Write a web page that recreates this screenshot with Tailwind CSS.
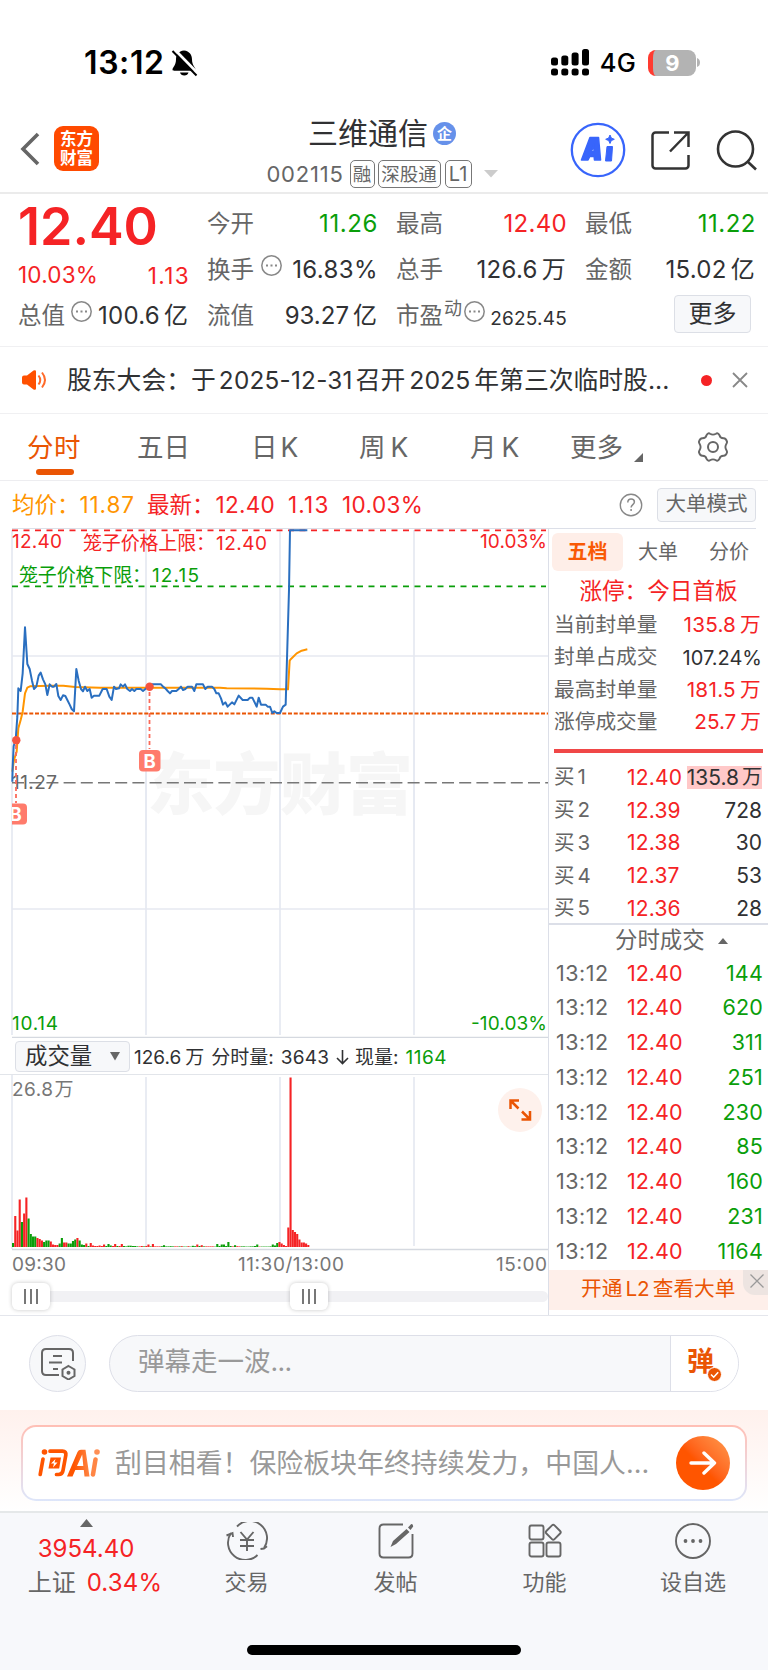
<!DOCTYPE html>
<html lang="zh-CN">
<head>
<meta charset="utf-8">
<meta name="viewport" content="width=768">
<title>三维通信 002115</title>
<script src="https://cdn.jsdelivr.net/npm/@tailwindcss/browser@4"></script>
</head>
<body class="bg-white">
<div class="w-[768px] h-[1670px] overflow-hidden flex flex-col bg-white text-[#303133] leading-none whitespace-nowrap font-['Inter','Noto_Sans_CJK_SC',sans-serif]">

<!-- status bar -->
<div class="h-[110px] shrink-0 flex items-start justify-between pl-[84px] pr-[68px] pt-[46px] text-black">
  <div class="flex items-center h-[33px]">
    <span class="text-[32px] font-semibold tracking-[0.6px]">13:12</span>
    <svg class="ml-[6px]" width="28" height="30" viewBox="0 0 28 30"><path d="M13 2.500c-5.500.5-8 4.500-8 9 0 6-3.500 8-3.500 10 0 .8.5 1.200 1.500 1.200h20c1 0 1.500-.4 1.500-1.200 0-2-3.500-4-3.500-10 0-4.500-2.500-8.500-8-9zM9 24.500h8.500c-.5 2-2 3-4.200 3S9.500 26.500 9 24.500z" fill="#000"/><path d="M3.500 1.500L27 25.500" stroke="#fff" stroke-width="3"/><path d="M1.500 3L25.500 27.500" stroke="#000" stroke-width="2"/></svg>
  </div>
  <div class="flex items-center h-[33px]">
    <svg width="38" height="27" viewBox="0 0 38 27"><g fill="#000"><rect x="0" y="8.500" width="7" height="8" rx="2.500"/><rect x="10.300" y="6.500" width="7" height="10" rx="2.500"/><rect x="20.600" y="3.500" width="7" height="13" rx="2.500"/><rect x="31" y="0" width="7" height="16.500" rx="2.500"/><rect x="0" y="19.500" width="7" height="7" rx="2.500"/><rect x="10.300" y="19.500" width="7" height="7" rx="2.500"/><rect x="20.600" y="19.500" width="7" height="7" rx="2.500"/><rect x="31" y="19.500" width="7" height="7" rx="2.500"/></g></svg>
    <span class="ml-[11px] text-[25.500px] font-medium tracking-[0.2px]">4G</span>
    <div class="ml-[12px] relative w-[48px] h-[26px] rounded-[8px] overflow-hidden bg-[#b3b3b3] flex items-center justify-center text-white text-[22px] font-bold border-l-[5px] border-[#ff3b30]"><span class="-ml-[4px]">9</span></div>
    <svg class="ml-px" width="3" height="9" viewBox="0 0 3 9"><path d="M0 0q3 1 3 4.500T0 9z" fill="#b3b3b3"/></svg>
  </div>
</div>

<!-- title bar -->
<div class="h-[84px] shrink-0 border-b-2 border-[#ebebeb] flex items-start justify-between pl-[20px] pr-[10px]">
  <div class="flex items-center pt-[16px] w-[167px]">
    <svg width="20" height="34" viewBox="0 0 20 34"><path d="M18 2L3 17l15 15" fill="none" stroke="#666" stroke-width="3.600"/></svg>
    <div class="ml-[14px] size-[45px] rounded-[9px] bg-[#ff4a00] text-white font-bold text-[16.500px] flex flex-col items-center justify-center gap-[2px] leading-[17px]"><span>东方</span><span>财富</span></div>
  </div>
  <div class="flex flex-col items-center w-[260px] pt-[7px]">
    <div class="flex items-center h-[32px] pl-[7px]"><span class="text-[30px]">三维通信</span>
      <span class="ml-[5px] size-[23px] rounded-full bg-[#6691ea] text-white text-[15px] font-bold flex items-center justify-center">企</span></div>
    <div class="flex items-center h-[28px] mt-[11px] text-[#666] pl-[7px]">
      <span class="text-[22px] tracking-[0.8px]">002115</span>
      <span class="ml-[6px] h-[28px] w-[25px] border border-[#777] rounded-[5px] text-[18.500px] flex items-center justify-center">融</span>
      <span class="ml-[3px] h-[28px] w-[63px] border border-[#777] rounded-[5px] text-[18.500px] flex items-center justify-center">深股通</span>
      <span class="ml-[4px] h-[28px] w-[27px] border border-[#777] rounded-[5px] text-[20px] flex items-center justify-center">L1</span>
      <svg class="ml-[12px]" width="14" height="8" viewBox="0 0 14 8"><path d="M0 0h14L7 7.500z" fill="#ccc"/></svg>
    </div>
  </div>
  <div class="flex items-center pt-[11px]">
    <svg class="mt-px" width="56" height="56" viewBox="0 0 56 56"><circle cx="28" cy="28" r="26.200" fill="#fff" stroke="#3865fb" stroke-width="2.300"/><path d="M20 15.500h8.500L30.500 38h-6l-.3-3.500h-4.500L18 38h-6.500zM24 22l-2.600 7.800H24z" fill="#3865fb" stroke="#3865fb" stroke-width="1.600" fill-rule="evenodd" stroke-linejoin="round"/><path d="M37 24.500h5.500L41.500 39H35.500z" fill="#3865fb" stroke="#3865fb" stroke-linejoin="round"/><path d="M40 13l1.300 3 3 1.300-3 1.300L40 21.500l-1.300-2.900-3-1.300 3-1.300z" fill="#3865fb" stroke="#3865fb"/></svg>
    <svg class="ml-[24px] mt-px" width="41" height="41" viewBox="0 0 41 41"><path d="M19 2.500H5.500a3 3 0 0 0-3 3v30a3 3 0 0 0 3 3h30a3 3 0 0 0 3-3V25M24 2.500h14.500v14.500M38.500 2.500L20 21.500" fill="none" stroke="#333" stroke-width="2.500"/></svg>
    <svg class="ml-[23px] mt-px" width="44" height="44" viewBox="0 0 44 44"><circle cx="21.500" cy="21" r="17.500" fill="none" stroke="#333" stroke-width="2.600"/><path d="M33.500 33.500l8.500 8" stroke="#333" stroke-width="2.600"/></svg>
  </div>
</div>

<!-- quote summary -->
<div class="h-[153px] shrink-0 border-b border-[#f0f0f2] pl-[18px] pt-[7px] grid grid-cols-[170px_170px_170px_170px] gap-[19px] text-[24px]">
  <div class="text-[#f52325]">
    <div class="h-[52px] flex items-center text-[52px] font-semibold">12.40</div>
    <div class="h-[40px] pt-[5px] flex items-center justify-between text-[22.500px]"><span class="tracking-[0.200px]">10.03%</span><span class="tracking-[1.400px] -mr-[2px] pt-px">1.13</span></div>
    <div class="h-[46px] flex items-center justify-between text-[#303133]"><span class="text-[#666] text-[23.500px]">总值</span><svg class="-mt-[10px] ml-[1px]" width="21" height="21" viewBox="0 0 21 21"><circle cx="10.500" cy="10.500" r="9.700" fill="none" stroke="#888" stroke-width="1.500"/><path d="M5 9.500h2v2H5zM9.500 9.500h2v2h-2zM14 9.500h2v2h-2z" fill="#888"/></svg><span class="tracking-[0.300px]">100.6<span class="ml-[4px] tracking-normal">亿</span></span></div>
  </div>
  <div>
    <div class="h-[46px] flex items-center justify-between"><span class="text-[#666] text-[23.500px]">今开</span><span class="text-[#0a9e0a] tracking-[0.600px] -mr-px">11.26</span></div>
    <div class="h-[46px] flex items-center justify-between"><span class="text-[#666] text-[23.500px]">换手</span><svg class="-mt-[10px] -ml-[4px]" width="21" height="21" viewBox="0 0 21 21"><circle cx="10.500" cy="10.500" r="9.700" fill="none" stroke="#888" stroke-width="1.500"/><path d="M5 9.500h2v2H5zM9.500 9.500h2v2h-2zM14 9.500h2v2h-2z" fill="#888"/></svg><span class="tracking-[0.400px] -mr-px">16.83%</span></div>
    <div class="h-[46px] flex items-center justify-between"><span class="text-[#666] text-[23.500px]">流值</span><span>93.27<span class="ml-[4px]">亿</span></span></div>
  </div>
  <div>
    <div class="h-[46px] flex items-center justify-between"><span class="text-[#666] text-[23.500px]">最高</span><span class="text-[#f52325] tracking-[0.300px] -mr-px">12.40</span></div>
    <div class="h-[46px] flex items-center justify-between"><span class="text-[#666] text-[23.500px]">总手</span><span class="tracking-[0.300px]">126.6<span class="ml-[4px]">万</span></span></div>
    <div class="h-[46px] flex items-center"><span class="text-[#666] text-[23.500px]">市盈</span><span class="text-[#666] text-[18px] -mt-[14px] ml-[1px]">动</span><svg class="-mt-[10px] ml-[2px]" width="21" height="21" viewBox="0 0 21 21"><circle cx="10.500" cy="10.500" r="9.700" fill="none" stroke="#888" stroke-width="1.500"/><path d="M5 9.500h2v2H5zM9.500 9.500h2v2h-2zM14 9.500h2v2h-2z" fill="#888"/></svg><span class="ml-auto -mr-px text-[19px] pt-[5px] tracking-[0.200px]">2625.45</span></div>
  </div>
  <div>
    <div class="h-[46px] flex items-center justify-between"><span class="text-[#666] text-[23.500px]">最低</span><span class="text-[#0a9e0a] tracking-[0.500px] -mr-px">11.22</span></div>
    <div class="h-[46px] flex items-center justify-between"><span class="text-[#666] text-[23.500px]">金额</span><span class="tracking-[0.300px]">15.02<span class="ml-[4px]">亿</span></span></div>
    <div class="h-[46px] flex items-center justify-end pr-[4px]"><span class="w-[77px] h-[38px] -mt-[4px] border border-[#dcdfe6] rounded-[4px] bg-[#f7f8fa] flex items-center justify-center">更多</span></div>
  </div>
</div>

<!-- announcement -->
<div class="h-[67px] shrink-0 border-b border-[#f0f0f2] flex items-center pl-[21px] pr-[20px]">
  <svg width="26" height="22" viewBox="0 0 26 22"><path d="M1 8.500q0-2 2-2h3L12.500 1.500q2.500-1 2.500 1v17q0 2-2.500 1L6 15.500H3q-2 0-2-2z" fill="#ff5000"/><path d="M17.500 6.500q3.500 4.500 0 9M21 3.500q6 7.500 0 15" fill="none" stroke="#ff6a2a" stroke-width="2"/></svg>
  <span class="ml-[20px] text-[24.800px]">股东大会：</span><span class="text-[24.800px]">于<span class="ml-[3px] mr-[3px] text-[24.300px] tracking-[0.250px]">2025-12-31</span>召开<span class="mx-[4px]">2025</span>年第三次临时股...</span>
  <span class="ml-auto size-[11px] rounded-full bg-[#f52325]"></span>
  <svg class="ml-[20px]" width="16" height="16" viewBox="0 0 16 16"><path d="M1 1l14 14M15 1L1 15" stroke="#888" stroke-width="1.800"/></svg>
</div>

<!-- period tabs -->
<div class="h-[67px] shrink-0 border-b border-[#ededf0] flex text-[26.500px] text-[#666] pl-[27px]">
  <div class="relative w-[110px] flex items-center text-[#ea5504] tracking-[0.500px]">分时<span class="absolute left-[9px] bottom-[5px] w-[38px] h-[6px] rounded-full bg-[#ea5504]"></span></div>
  <div class="w-[114px] flex items-center">五日</div>
  <div class="w-[108px] flex items-center">日<span class="ml-[3px]">K</span></div>
  <div class="w-[111px] flex items-center">周<span class="ml-[5px]">K</span></div>
  <div class="w-[100px] flex items-center">月<span class="ml-[5px]">K</span></div>
  <div class="w-[127px] flex items-center">更多<svg class="ml-[11px] mt-[20px]" width="9" height="9" viewBox="0 0 9 9"><path d="M9 0v9H0z" fill="#666"/></svg></div>
  <div class="flex items-center"><svg width="32" height="30" viewBox="0 0 32 30"><path d="M9.500 3.200C10.800 1 12 .9 13 1.700Q16 3.600 19 1.700C20 .9 21.200 1 22.500 3.200Q23.300 6.400 26.800 6.200C28.600 6.200 29.500 8 30 9.600 30.500 11.300 28.400 12 28.400 15S30.500 18.700 30 20.400C29.500 22 28.600 23.800 26.800 23.800Q23.300 23.600 22.500 26.800C21.200 29 20 29.100 19 28.300Q16 26.400 13 28.300C12 29.100 10.800 29 9.500 26.800Q8.700 23.600 5.200 23.800C3.400 23.800 2.500 22 2 20.400 1.500 18.700 3.600 18 3.600 15S1.500 11.300 2 9.600C2.500 8 3.400 6.200 5.200 6.200Q8.700 6.400 9.500 3.200z" fill="none" stroke="#666" stroke-width="1.900"/><circle cx="16" cy="15" r="5" fill="none" stroke="#666" stroke-width="2"/></svg></div>
</div>

<!-- price legend -->
<div class="h-[47px] shrink-0 flex items-center pl-[12px] pr-[12px] text-[22.500px] text-[#f52325]">
  <span class="w-[135px] pt-[2px] text-[#ff9500]">均价：<span class="tracking-[0.900px]">11.87</span></span>
  <span class="w-[141px] pt-[2px]">最新：<span class="tracking-[0.300px] ml-px">12.40</span></span>
  <span class="w-[54px] pt-[2px] tracking-[1.200px]">1.13</span><span class="pt-[2px] tracking-[0.400px]">10.03%</span>
  <svg class="ml-auto" width="24" height="24" viewBox="0 0 24 24"><circle cx="12" cy="12" r="10.700" fill="none" stroke="#888" stroke-width="1.400"/><path d="M8.800 9.500q0-3.500 3.300-3.500t3.300 3c0 2.500-3.300 2.800-3.300 5.500M12.100 16v2" fill="none" stroke="#888" stroke-width="1.500"/></svg>
  <span class="ml-[14px] w-[99px] h-[34px] border border-[#dcdfe6] rounded-[4px] bg-[#f7f8fa] text-[#666] text-[20.500px] flex items-center justify-center">大单模式</span>
</div>

<!-- chart and order book -->
<div class="h-[788px] shrink-0 flex border-b border-[#e4e6ec]">
  <div class="w-[549px] border-r border-[#dcdfe8] flex flex-col">
    <svg class="shrink-0" width="548" height="510" viewBox="0 528 548 510">
      <path d="M12 528.500H548" stroke="#dcdfe8"/>
      <path d="M12 530V1035M146 530V1035M280 530V1035M414 530V1035M12 656H548M12 909H548" stroke="#e6e9f1" stroke-width="1.700"/>
      <path d="M12 1037.300H548" stroke="#d5d9e0" stroke-width="1.300"/>
      <text x="147" y="809" textLength="266" font-size="67" font-weight="900" fill="#f6f6f6">东方财富</text>
      <path d="M146 740V830M280 740V830M414 740V830" stroke="#e6e9f1" stroke-width="1.700"/>
      <path d="M12 530.300H546" stroke="#f52325" stroke-width="1.800" stroke-dasharray="6 5.500"/>
      <path d="M12 586.300H546" stroke="#0a9e0a" stroke-width="1.800" stroke-dasharray="6 5.500"/>
      <path d="M12 713.600H548" stroke="#ea5504" stroke-width="2" stroke-dasharray="4 1.750"/>
      <path d="M12 782.700H548" stroke="#777" stroke-width="1.600" stroke-dasharray="12 5.200"/>
      <text x="12" y="788.500" textLength="45" font-size="19" fill="#666">11.27</text>
      <g transform="translate(0 590) scale(.33333)" fill="none" stroke-linejoin="round">
        <path stroke="#ff9500" stroke-width="6" d="M37 545L42 510 50 485 55 415 62 390 68 365 75 310 82 293 90 289 150 287 190 287 225 291 300 293 660 293 680 295 800 296 840 298 864 298 869 212 873 207 890 190 905 182 922 178"/>
        <path stroke="#2a6fc0" stroke-width="6" d="M37 575L38 530 41 468 47 450 52 380 55 295 62 303 68 250 75 112 82 222 89 237 96 272 102 297 109 290 116 257 122 248 129 268 136 283 142 315 149 283 156 290 162 290 169 282 175 318 182 330 189 316 196 318 202 330 209 344 215 357 222 364 229 237 236 272 243 297 249 304 255 290 262 303 269 297 275 323 282 317 298 317 308 297 320 297 328 320 335 330 342 290 348 297 357 295 362 283 369 290 375 283 382 297 390 303 396 297 403 303 409 297 422 297 429 303 436 297 443 292 449 290 456 283 483 283 489 290 496 295 503 303 510 310 516 303 529 303 536 297 543 290 549 300 556 297 563 290 576 290 583 303 589 283 609 283 616 297 623 290 636 290 643 297 649 310 656 310 663 325 669 344 676 337 683 350 696 337 703 343 716 317 728 330 743 330 750 323 757 323 770 350 776 323 783 344 797 344 803 350 810 350 817 369 823 364 830 369 840 369 849 350 857 344 867 0 870 -179 922 -179"/>
      </g>
      <g stroke="#fb6a5a" stroke-width="1.800" stroke-dasharray="4 3"><path d="M16 745V803M149.500 692V749"/></g>
      <circle cx="16.300" cy="740.300" r="4.200" fill="#f5533f"/><circle cx="149.600" cy="686.800" r="4.200" fill="#f5533f"/>
      <path d="M12 803.500h11q4 0 4 4v13q0 4-4 4H12z" fill="#ff7b6c"/>
      <rect x="139" y="750" width="21.500" height="21.500" rx="4" fill="#ff7b6c"/>
      <clipPath id="plot"><path d="M12 528h536v510H12z"/></clipPath>
      <text x="9.500" y="821" font-size="18.500" font-weight="700" fill="#fff" clip-path="url(#plot)">B</text>
      <text x="143.500" y="767.500" font-size="18.500" font-weight="700" fill="#fff">B</text>
      <g font-size="19" fill="#f52325"><text x="12" y="547.500" textLength="50">12.40</text><text x="83" y="549.500" textLength="132">笼子价格上限：</text><text x="216" y="549.500" textLength="51">12.40</text><text x="480" y="547.500" textLength="67">10.03%</text></g>
      <g font-size="19" fill="#0a9e0a"><text x="19" y="582" textLength="132">笼子价格下限：</text><text x="152" y="582" textLength="47">12.15</text><text x="12" y="1030" textLength="46">10.14</text><text x="471" y="1030" textLength="76">-10.03%</text></g>
    </svg>
    <div class="h-[37px] shrink-0 border-b border-[#e2e5ea] flex items-center pl-[15px] text-[19px]">
      <div class="w-[115px] h-[31px] border border-[#dcdfe6] rounded-[4px] bg-[#f7f8fa] flex items-center justify-between pl-[9px] pr-[9px] text-[22.400px]">成交量<svg width="10" height="9" viewBox="0 0 10 9"><path d="M0 0h10L5 8.500z" fill="#666"/></svg></div>
      <span class="ml-[4px] pt-[2px]">126.6<span class="ml-[4px]">万</span></span><span class="ml-[7px] pt-[2px]">分时量:</span><span class="ml-[7px] pt-[2px] tracking-[0.200px]">3643</span>
      <svg class="ml-[7px] mt-px" width="13" height="16" viewBox="0 0 13 16"><path d="M6.500 1v13M1 9l5.500 5.500L12 9" fill="none" stroke="#303133" stroke-width="1.600"/></svg>
      <span class="ml-[6px] pt-[2px]">现量:</span><span class="ml-[7px] pt-[2px] text-[#0a9e0a] tracking-[0.500px]">1164</span>
    </div>
    <div class="relative h-[202px] shrink-0">
      <svg width="548" height="202" viewBox="0 1075 548 202">
        <path d="M12 1075V1249M146 1077V1246M280 1077V1246M414 1077V1246" stroke="#e6e9f1" stroke-width="1.700"/>
        <path d="M12 1249.500H548" stroke="#d5d9e0" stroke-width="1.300"/>
        <g id="bars"></g>
        <g font-size="19" fill="#777"><text x="12" y="1096" textLength="41">26.8</text><text x="54.500" y="1096">万</text><text x="12" y="1271" textLength="54">09:30</text><text x="238" y="1271" textLength="106">11:30/13:00</text><text x="496" y="1271" textLength="51">15:00</text></g>
      </svg>
      <div class="absolute left-[498px] top-[13px] size-[44px] rounded-full bg-[#fef1ec] flex items-center justify-center"><svg width="24" height="24" viewBox="0 0 24 24"><path d="M2.500 11V2.500h8.500M3 3l7.500 7.500M22 13v8.500h-8.500M21.500 21L14 13.500" fill="none" stroke="#ea5504" stroke-width="2.500"/></svg></div>
    </div>
    <div class="flex-1 pl-[12px] pt-[6px]">
      <div class="relative h-[27px] flex items-center">
        <span class="w-full h-[11px] rounded-full bg-[#f1f1f4]"></span>
        <span class="absolute left-0 top-0 w-[38px] h-[27px] rounded-[6px] bg-white shadow-[0_0_4px_rgba(0,0,0,0.22)] flex items-center justify-center gap-[4px]"><i class="w-[2px] h-[15px] bg-[#777]"></i><i class="w-[2px] h-[15px] bg-[#777]"></i><i class="w-[2px] h-[15px] bg-[#777]"></i></span>
        <span class="absolute left-[278px] top-0 w-[38px] h-[27px] rounded-[6px] bg-white shadow-[0_0_4px_rgba(0,0,0,0.22)] flex items-center justify-center gap-[4px]"><i class="w-[2px] h-[15px] bg-[#777]"></i><i class="w-[2px] h-[15px] bg-[#777]"></i><i class="w-[2px] h-[15px] bg-[#777]"></i></span>
      </div>
    </div>
  </div>

  <div class="w-[219px] flex flex-col">
    <div class="h-px mr-[12px] bg-[#dcdfe8] shrink-0"></div>
    <div class="h-[46px] shrink-0 flex items-center pl-[3px] text-[20px] text-[#666]">
      <span class="w-[71px] h-[38px] rounded-[6px] bg-[#feeee8] text-[#f95a05] font-bold flex items-center justify-center">五档</span>
      <span class="ml-[15px]">大单</span><span class="ml-[31px]">分价</span>
    </div>
    <div class="h-[32px] shrink-0 flex items-center justify-center text-[22.600px] text-[#f52325]">涨停：今日首板</div>
    <div class="h-[132px] shrink-0 flex flex-col pt-[2px] pl-[5px] pr-[7px] text-[20.700px]">
      <div class="h-[32.500px] flex items-center justify-between"><span class="text-[#666]">当前封单量</span><span class="text-[#f52325] tracking-[0.200px]">135.8<span class="ml-[4px]">万</span></span></div>
      <div class="h-[32.500px] flex items-center justify-between"><span class="text-[#666]">封单占成交</span><span class="text-[20px] -mr-px">107.24%</span></div>
      <div class="h-[32.500px] flex items-center justify-between"><span class="text-[#666]">最高封单量</span><span class="text-[#f52325] tracking-[0.300px]">181.5<span class="ml-[4px]">万</span></span></div>
      <div class="h-[32.500px] flex items-center justify-between"><span class="text-[#666]">涨停成交量</span><span class="text-[#f52325]">25.7<span class="ml-[4px]">万</span></span></div>
    </div>
    <div class="h-[4px] shrink-0 mt-[10px] mx-[5px] bg-[#f04747]"></div>
    <div class="h-[172px] shrink-0 pt-[8px] border-b-2 border-[#dcdfe8] pl-[5px] pr-[6px] text-[21px]" id="bids"></div>
    <div class="h-[31px] shrink-0 flex items-center pl-[66px] text-[22.400px] text-[#666]">分时成交<svg class="ml-[13px]" width="10" height="6" viewBox="0 0 10 6"><path d="M0 6h10L5 0z" fill="#666"/></svg></div>
    <div class="h-[314px] shrink-0 pl-[7px] pr-[5px] text-[21.500px]" id="ticks"></div>
    <div class="relative h-[40px] shrink-0 bg-[#feefea] text-[#ea5504] text-[20.700px] flex items-center pl-[32px] pb-[2px]">开通<span class="mx-[3px]">L2</span>查看大单
      <span class="absolute right-0 top-0 w-[25px] h-[25px] rounded-bl-[12px] bg-[#ede4e1] flex items-center justify-center"><svg class="ml-[3px] -mt-[3px]" width="14" height="14" viewBox="0 0 14 14"><path d="M.5.5l13 13M13.500.5l-13 13" stroke="#999" stroke-width="1.300"/></svg></span>
    </div>
  </div>
</div>

<!-- bullet comment input -->
<div class="h-[94px] shrink-0 flex items-center pl-[29px] pr-[29px]">
  <div class="size-[57px] rounded-full border border-[#dddfe8] bg-[#f7f8fa] flex items-center justify-center"><svg class="mt-[2px]" width="36" height="32" viewBox="0 0 36 32"><g fill="none" stroke="#666" stroke-width="2"><path d="M19 27H6q-4 0-4-4V5q0-4 4-4h23q4 0 4 4v8M13 8h9M9 14.500h13M13 21h5"/><path d="M28.500 18l6 3.500v6.500l-6 3.500-6-3.500v-6.500z"/></g><circle cx="28.500" cy="24.700" r="2" fill="#666"/></svg></div>
  <div class="ml-[23px] w-[630px] h-[57px] rounded-full border border-[#dddfe8] bg-[#f7f8fa] flex overflow-hidden">
    <div class="flex-1 flex items-center pl-[28px] pb-[4px] text-[26.500px] text-[#999]">弹幕走一波<span class="tracking-[-0.600px]">...</span></div>
    <div class="w-[68px] bg-white border-l border-[#dddfe8] flex items-center relative pl-[16px] pb-[3px] text-[#ea5504] text-[27px] font-bold">弹<svg class="absolute left-[36px] top-[31px]" width="15" height="15" viewBox="0 0 15 15"><circle cx="7.500" cy="7.500" r="7" fill="#ea5504" stroke="#fff"/><path d="M4 7.500l2.700 2.700L11.200 5.300" fill="none" stroke="#fff" stroke-width="1.600"/></svg></div>
  </div>
</div>

<!-- AI question bar -->
<div class="h-[101px] shrink-0 bg-linear-to-b from-[#fff1ed] to-white pt-[15px] px-[21px]">
  <div class="h-[76px] w-[726px] rounded-[15px] p-[2px] bg-linear-to-b from-[#ffbfb5] to-[#dde6fa]">
    <div class="size-full rounded-[13px] bg-white flex items-center pl-[15px] pr-[15px]">
      <svg width="62" height="28" viewBox="0 0 62 28"><defs><linearGradient id="ai" x1="0" y1="0" x2="1" y2="0"><stop offset=".3" stop-color="#ff5500"/><stop offset="1" stop-color="#ff8544"/></linearGradient></defs><g fill="none" stroke="#ff5500" stroke-width="3.700" stroke-linecap="round" stroke-linejoin="round"><path d="M5 10L2.200 25.500M12 2.200h12.500q4 0 3.300 4L25 21.500q-.6 4-4.500 4h-2"/></g><circle cx="6.500" cy="3" r="2.800" fill="#ff5500"/><path d="M12.500 8.500h10.500l-1.800 11H10.500z" fill="#ff5500"/><path d="M17.500 10l-4.500 4.500h3l-1 4 4.500-5h-3z" fill="#fff"/><path d="M29 27.500L39.500 3Q40.500.8 43 .8h4.500L51.500 27.500h-5L45.800 21h-8.500l-2.800 6.500zM39 17h6.300L44.200 5.500z" fill="url(#ai)"/><path d="M57.500 10.500L55 25.500" stroke="#ff8544" stroke-width="4.500" stroke-linecap="round"/><circle cx="59" cy="3" r="2.800" fill="#ff8f55"/></svg>
      <span class="ml-[15px] text-[26.900px] text-[#999]">刮目相看！保险板块年终持续发力，中国人...</span>
      <span class="ml-auto size-[54px] rounded-full bg-linear-to-tr from-[#ff5500] from-45% to-[#ff9a4d] flex items-center justify-center"><svg width="28" height="24" viewBox="0 0 28 24"><path d="M2 12h23.500M15 2l10.500 10L15 22" fill="none" stroke="#fff" stroke-width="3.400" stroke-linecap="round" stroke-linejoin="round"/></svg></span>
    </div>
  </div>
</div>

<!-- bottom navigation -->
<div class="h-[159px] shrink-0 border-t-2 border-[#e5e8e9] bg-[#f7f8fb] flex flex-col items-center">
  <div class="h-[132px] w-full flex text-[22px] text-[#666]">
    <div class="w-[172px] flex flex-col items-center pt-[6px]">
      <svg width="13" height="8" viewBox="0 0 13 8"><path d="M0 8h13L6.500 0z" fill="#666"/></svg>
      <span class="h-[34px] mt-[5px] flex items-center text-[24px] text-[#f52325]">3954.40</span>
      <span class="h-[34px] flex items-center gap-[11px] text-[24px] pl-[18px]"><span>上证</span><span class="text-[#f52325] tracking-[0.200px]">0.34%</span></span>
    </div>
    <div class="w-[149px] flex flex-col items-center pt-[9px]">
      <svg width="42" height="38" viewBox="0 0 42 38"><g fill="none" stroke="#666" stroke-width="1.900"><path d="M11 4.500A17.300 17.300 0 0 1 38 26M31.500 33A17.300 17.300 0 0 1 5 11"/><path d="M.5 13.500l6-2.500.5 4M34.500 27l3.500-.500 3-2.200"/><path d="M14.500 10l6.500 7.500L27.500 10M14 18h14M14 24h14M21 17.500V29"/></g></svg>
      <span class="mt-[11px]">交易</span></div>
    <div class="w-[149px] flex flex-col items-center pt-[9px]">
      <svg width="36" height="38" viewBox="0 0 36 38"><path d="M25 2.500H5.500q-4 0-4 4v25q0 4 4 4h25q4 0 4-4V12" fill="none" stroke="#666" stroke-width="1.900"/><path d="M12.500 25l2.500-6L28.500 7l3 3L18 22zM30 5.500L33 2.200q2-.5 2.200 2.200L32.500 8z" fill="#666"/></svg>
      <span class="mt-[11px]">发帖</span></div>
    <div class="w-[149px] flex flex-col items-center pt-[9px]">
      <svg width="34" height="38" viewBox="0 0 34 38"><g fill="none" stroke="#666" stroke-width="1.900"><rect x="1.500" y="3.500" width="14" height="14" rx="2"/><rect x="1.500" y="20.500" width="14" height="14" rx="2"/><rect x="18.500" y="20.500" width="14" height="14" rx="2"/><rect x="19.500" y="4.500" width="11.500" height="11.500" rx="1.800" transform="rotate(45 25.250 10.250)"/></g></svg>
      <span class="mt-[11px]">功能</span></div>
    <div class="w-[148px] flex flex-col items-center pt-[9px]">
      <svg width="38" height="38" viewBox="0 0 38 38"><circle cx="19" cy="19" r="17" fill="none" stroke="#666" stroke-width="1.900"/><circle cx="11.500" cy="19" r="1.900" fill="#666"/><circle cx="19" cy="19" r="1.900" fill="#666"/><circle cx="26.500" cy="19" r="1.900" fill="#666"/></svg>
      <span class="mt-[11px]">设自选</span></div>
  </div>
  <div class="w-[274px] h-[10px] rounded-full bg-black"></div>
</div>
</div>

<script>
// Minute volume bars: [direction, height], one per minute from 09:30
const volumes = 'g4 r31 r16.5 r47.5 g25 r33.500 r49.500 g28.500 g13 g10.5 g10.5 r9 r8 r6.5 g5 g6.5 g6.5 r5.500 r2.500 r2 r2 g3.500 g9 r4.500 r4.500 g3.500 g3.500 g6 g7.500 r9 g6.500 g2.500 g2 r3.500 g1 r4 r1.500 r1 r1 r1.500 r1 r2.500 g1 g3 g1.500 r1 r3 g1 r1 r3 g1 g.6 g1.300 g1.300 g1 g1 g.6 r.6 r1 g.6 r1 r2.500 g.6 r3 r.6 r.6 r.6 g.8 g1.800 g.6 g.6 g.8 g.6 r.6 r.6 g.6 r.8 g.4 g.4 r.8 g.4 g1.200 g.8 r2.500 g1 r1.800 g.6 r.6 r.6 r.6 r.6 g.4 g3 g1 g2.500 g2.500 g1 g5 g1 r.6 g1.800 r.8 r.6 g.6 g.6 g.4 g.4 g.6 g.6 g1 g2.500 r.4 g.4 g.4 g.4 g.4 g.6 g2.500 g1.500 g4 r5 r3.500 r2 r1 r19.500 r169.500 r17 r15 r13 r7.500 r4.500 r4.500 r3.500 r2'.split(' ');
document.getElementById('bars').innerHTML = volumes.map((v, i) => {
  const h = +v.slice(1);
  return `<rect x="${(12 + i * 2.22).toFixed(2)}" y="${1247 - h}" width="2.1" height="${h}" fill="${v[0] === 'r' ? '#f52325' : '#0a9e0a'}"/>`;
}).join('');
document.getElementById('bids').innerHTML = [['1','12.40','135.8'],['2','12.39','728'],['3','12.38','30'],['4','12.37','53'],['5','12.36','28']].map(([n, p, v]) =>
  `<div class="h-[32.800px] flex items-center"><span class="w-[73px] text-[#666] text-[20.500px]">买<span class="ml-[3px]">${n}</span></span><span class="text-[#f52325] tracking-[0.200px]">${p}</span>` +
  (n === '1' ? `<span class="ml-auto h-[23px] w-[75px] bg-[#ffc8c8] flex items-center justify-end">${v}<span class="ml-[3px] text-[20px]">万</span></span>` : `<span class="ml-auto">${v}</span>`) + '</div>').join('');
document.getElementById('ticks').innerHTML = [144,620,311,251,230,85,160,231,1164].map(v =>
  `<div class="h-[34.750px] flex items-center"><span class="w-[71px] text-[#666] tracking-[0.500px]">13:12</span><span class="text-[#f52325]">12.40</span><span class="ml-auto text-[#0a9e0a] tracking-[0.200px]">${v}</span></div>`).join('');
</script>
</body>
</html>
